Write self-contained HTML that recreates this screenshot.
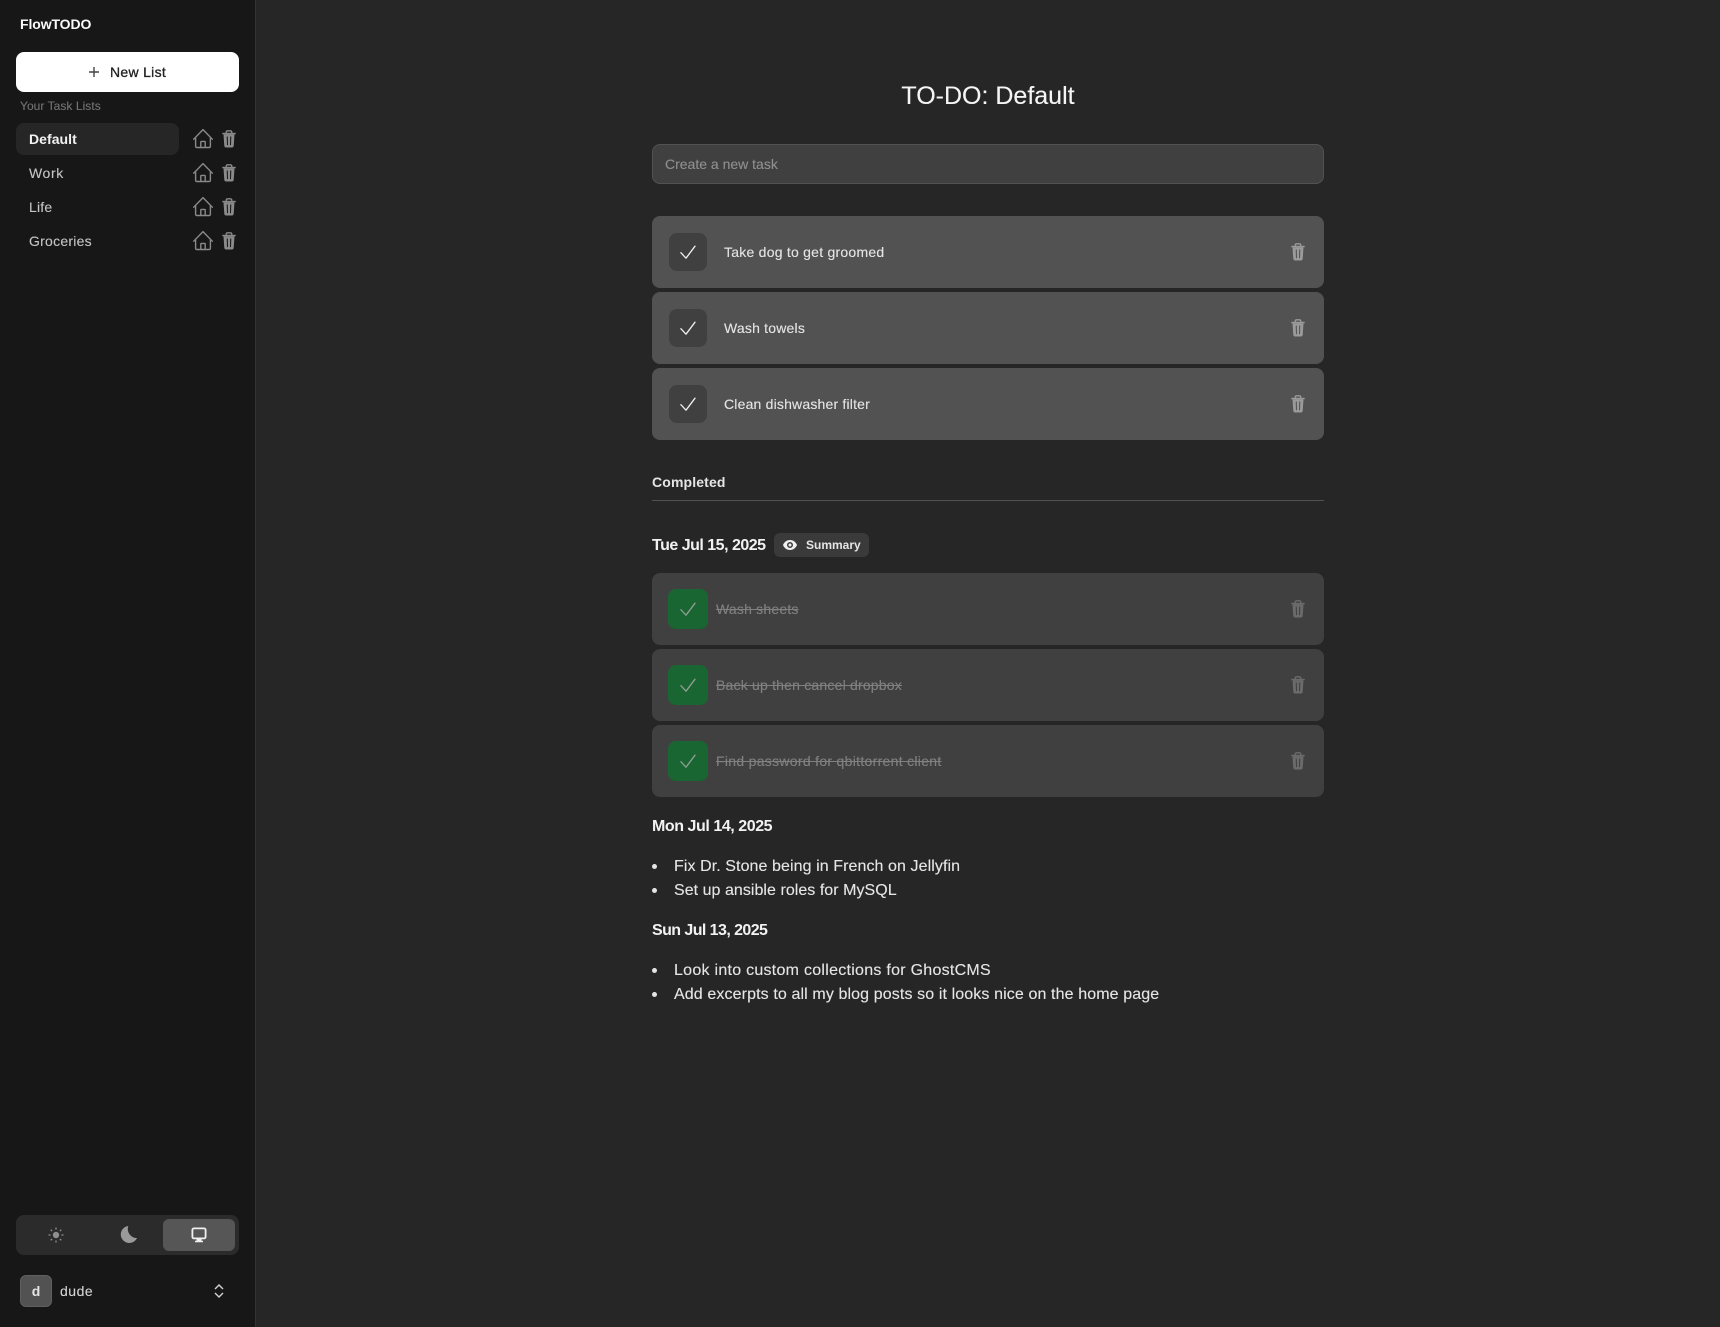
<!DOCTYPE html>
<html lang="en"><head><meta charset="utf-8"><title>FlowTODO</title>
<style>
*{box-sizing:border-box}
html,body{margin:0;padding:0;width:1720px;height:1327px;overflow:hidden;background:#262626;font-family:"Liberation Sans",sans-serif;color:#e5e5e5}
.a{position:absolute}
.t{position:absolute;white-space:nowrap;line-height:20px;height:20px;-webkit-text-stroke:.12px currentColor}
.b{font-weight:700;-webkit-text-stroke:0}
.side{left:0;top:0;width:256px;height:1327px;background:#171717;border-right:1px solid #333}
.task{left:652px;width:672px;height:72px;border-radius:8px;background:#525252}
.task.d{background:#404040}
.box{left:669px;width:38px;height:38px;border-radius:8px;background:#404040}
.gbox{left:668px;width:40px;height:40px;border-radius:8px;background:#1a6632}
svg{position:absolute;overflow:visible}
</style></head><body>
<svg width="0" height="0" style="position:absolute"><defs>
<symbol id="trash" viewBox="0 0 14 18"><path d="M4.200 3V2.200C4.200 1.200 5 .8 5.800.8h2.400c.8 0 1.600.4 1.600 1.400V3" fill="none" stroke="currentColor" stroke-width="1.300"/><path d="M.3 2.800h13.400v1.500H.3z" fill="currentColor"/><path d="M1.500 4.300h11l-.8 11.600c-.1 1-.8 1.600-1.700 1.600H4c-.9 0-1.600-.6-1.700-1.600zM4.700 6.500l.3 8.600h1l-.2-8.600zM8.200 6.500l-.2 8.600h1l.3-8.600z" fill="currentColor" fill-rule="evenodd"/></symbol>
<symbol id="home" viewBox="0 0 20 20"><path d="M.7 10.200 10 .6l9.300 9.600M2.600 8.300v9c0 .7.5 1.200 1.200 1.200h12.400c.7 0 1.200-.5 1.200-1.200v-9M7.800 18.500v-5.400c0-.4.3-.7.7-.7h3c.4 0 .7.3.7.7v5.400" fill="none" stroke="currentColor" stroke-width="1.400" stroke-linecap="round" stroke-linejoin="round"/></symbol>
<symbol id="check" viewBox="0 0 16 16"><path d="M.9 7.700 6 13.200 15 1.200" fill="none" stroke="currentColor" stroke-width="1.300" stroke-linecap="round" stroke-linejoin="round"/></symbol>
</defs></svg>

<div class="a side"></div>
<div class="t b" style="left:20px;top:14px;font-size:14px;color:#fafafa;letter-spacing:-.1px">FlowTODO</div>
<div class="a" style="left:16px;top:52px;width:223px;height:40px;background:#fff;border-radius:8px"></div>
<svg style="left:89px;top:67px;color:#444" width="10" height="10" viewBox="0 0 10 10"><path d="M5 0v10M0 5h10" stroke="currentColor" stroke-width="1.400"/></svg>
<div class="t" style="left:110px;top:62px;font-size:14px;color:#222;letter-spacing:.3px;-webkit-text-stroke:.3px #222">New List</div>
<div class="t" style="left:20px;top:96px;font-size:12px;color:#737373;letter-spacing:.05px">Your Task Lists</div>
<div class="a" style="left:16px;top:123px;width:163px;height:32px;background:#262626;border-radius:8px"></div>
<div class="t b" style="left:29px;top:129px;font-size:14px;color:#f2f2f2;letter-spacing:.05px">Default</div>
<div class="t" style="left:29px;top:163px;font-size:14px;color:#c4c4c4;letter-spacing:.6px">Work</div>
<div class="t" style="left:29px;top:197px;font-size:14px;color:#c4c4c4;letter-spacing:.2px">Life</div>
<div class="t" style="left:29px;top:231px;font-size:14px;color:#c4c4c4;letter-spacing:.25px">Groceries</div>

<svg style="left:193px;top:129px;color:#8a8a8a" width="20" height="20"><use href="#home"/></svg>
<svg style="left:222px;top:130px;color:#8a8a8a" width="14" height="18"><use href="#trash"/></svg>
<svg style="left:193px;top:163px;color:#8a8a8a" width="20" height="20"><use href="#home"/></svg>
<svg style="left:222px;top:164px;color:#8a8a8a" width="14" height="18"><use href="#trash"/></svg>
<svg style="left:193px;top:197px;color:#8a8a8a" width="20" height="20"><use href="#home"/></svg>
<svg style="left:222px;top:198px;color:#8a8a8a" width="14" height="18"><use href="#trash"/></svg>
<svg style="left:193px;top:231px;color:#8a8a8a" width="20" height="20"><use href="#home"/></svg>
<svg style="left:222px;top:232px;color:#8a8a8a" width="14" height="18"><use href="#trash"/></svg>

<div class="a" style="left:16px;top:1215px;width:223px;height:40px;background:#2b2b2b;border-radius:8px"></div>
<div class="a" style="left:163px;top:1219px;width:72px;height:32px;background:#565656;border-radius:6px"></div>
<svg style="left:48px;top:1227px;color:#8f8f8f" width="16" height="16" viewBox="0 0 16 16"><circle cx="8" cy="8" r="3.200" fill="currentColor"/><path d="M8 .5v2M8 13.500v2M.5 8h2M13.500 8h2M2.700 2.700l1.400 1.400M11.900 11.900l1.400 1.400M2.700 13.300l1.400-1.400M11.900 4.100l1.400-1.400" stroke="currentColor" stroke-width="1.300"/></svg>
<svg style="left:120px;top:1226px;color:#9a9a9a" width="17" height="17" viewBox="0 0 17 17"><path d="M8.300 0A8.500 8.500 0 1 0 17 12 A9 9 0 0 1 8.300 0z" fill="currentColor"/></svg>
<svg style="left:191px;top:1227px;color:#f0f0f0" width="16" height="16" viewBox="0 0 16 16"><rect x="1.400" y="1.400" width="13.200" height="10" rx="1.500" fill="none" stroke="currentColor" stroke-width="1.800"/><path d="M5.500 12h5v1.800h1.500v1.500H4v-1.500h1.500z" fill="currentColor"/></svg>

<div class="a" style="left:20px;top:1275px;width:32px;height:32px;background:#525252;border-radius:6px;border:1px solid #5f5f5f"></div>
<div class="t b" style="left:20px;top:1281px;width:32px;text-align:center;font-size:14px;color:#e5e5e5">d</div>
<div class="t" style="left:60px;top:1281px;font-size:14px;color:#d4d4d4;letter-spacing:.5px">dude</div>
<svg style="left:214px;top:1284px;color:#d4d4d4" width="10" height="14" viewBox="0 0 10 14"><path d="M1 5 5 1l4 4M1 9l4 4 4-4" fill="none" stroke="currentColor" stroke-width="1.400"/></svg>

<div class="t" style="left:652px;top:81px;width:672px;height:30px;line-height:30px;text-align:center;font-size:25px;color:#f5f5f5">TO-DO: Default</div>

<div class="a" style="left:652px;top:144px;width:672px;height:40px;background:#404040;border:1px solid #525252;border-radius:8px"></div>
<div class="t" style="left:665px;top:154px;font-size:14px;color:#8f8f8f">Create a new task</div>

<div class="a task" style="top:216px"></div>
<div class="a box" style="top:233px"></div>
<svg style="left:680px;top:245px;color:#f0f0f0" width="16" height="16"><use href="#check"/></svg>
<div class="t" style="left:724px;top:242px;font-size:14px;color:#e5e5e5;letter-spacing:.24px">Take dog to get groomed</div>
<svg style="left:1291px;top:243px;color:#9a9a9a" width="14" height="18"><use href="#trash"/></svg>

<div class="a task" style="top:292px"></div>
<div class="a box" style="top:309px"></div>
<svg style="left:680px;top:321px;color:#f0f0f0" width="16" height="16"><use href="#check"/></svg>
<div class="t" style="left:724px;top:318px;font-size:14px;color:#e5e5e5;letter-spacing:.2px">Wash towels</div>
<svg style="left:1291px;top:319px;color:#9a9a9a" width="14" height="18"><use href="#trash"/></svg>

<div class="a task" style="top:368px"></div>
<div class="a box" style="top:385px"></div>
<svg style="left:680px;top:397px;color:#f0f0f0" width="16" height="16"><use href="#check"/></svg>
<div class="t" style="left:724px;top:394px;font-size:14px;color:#e5e5e5;letter-spacing:.19px">Clean dishwasher filter</div>
<svg style="left:1291px;top:395px;color:#9a9a9a" width="14" height="18"><use href="#trash"/></svg>

<div class="t b" style="left:652px;top:472px;font-size:14px;color:#e5e5e5;letter-spacing:.14px">Completed</div>
<div class="a" style="left:652px;top:500px;width:672px;height:1px;background:#525252"></div>

<div class="t b" style="left:652px;top:536px;font-size:16px;color:#f2f2f2;letter-spacing:-.5px">Tue Jul 15, 2025</div>
<div class="a" style="left:774px;top:533px;width:95px;height:24px;background:#3a3a3a;border-radius:6px"></div>
<svg style="left:783px;top:540px;color:#f0f0f0" width="14" height="10" viewBox="0 0 14 10"><path d="M7 0C3.800 0 1.200 2 0 5c1.200 3 3.800 5 7 5s5.800-2 7-5c-1.200-3-3.800-5-7-5zm0 8a3 3 0 1 1 0-6 3 3 0 0 1 0 6z" fill="currentColor" fill-rule="evenodd"/><circle cx="7" cy="5" r="1.500" fill="currentColor"/></svg>
<div class="t b" style="left:806px;top:535px;font-size:12px;color:#e5e5e5">Summary</div>

<div class="a task d" style="top:573px"></div>
<div class="a gbox" style="top:589px"></div>
<svg style="left:680px;top:602px;color:#8f9f93" width="16" height="16"><use href="#check"/></svg>
<div class="t" style="left:716px;top:599px;font-size:14px;color:#808080;text-decoration:line-through;letter-spacing:.2px">Wash sheets</div>
<svg style="left:1291px;top:600px;color:#6b6b6b" width="14" height="18"><use href="#trash"/></svg>

<div class="a task d" style="top:649px"></div>
<div class="a gbox" style="top:665px"></div>
<svg style="left:680px;top:678px;color:#8f9f93" width="16" height="16"><use href="#check"/></svg>
<div class="t" style="left:716px;top:675px;font-size:14px;color:#808080;text-decoration:line-through;letter-spacing:.2px">Back up then cancel dropbox</div>
<svg style="left:1291px;top:676px;color:#6b6b6b" width="14" height="18"><use href="#trash"/></svg>

<div class="a task d" style="top:725px"></div>
<div class="a gbox" style="top:741px"></div>
<svg style="left:680px;top:754px;color:#8f9f93" width="16" height="16"><use href="#check"/></svg>
<div class="t" style="left:716px;top:751px;font-size:14px;color:#808080;text-decoration:line-through;letter-spacing:.3px">Find password for qbittorrent client</div>
<svg style="left:1291px;top:752px;color:#6b6b6b" width="14" height="18"><use href="#trash"/></svg>

<div class="t b" style="left:652px;top:817px;font-size:16px;color:#f2f2f2;letter-spacing:-.44px">Mon Jul 14, 2025</div>
<div class="a" style="left:652px;top:864px;width:5px;height:5px;border-radius:50%;background:#e5e5e5"></div>
<div class="t" style="left:674px;top:857px;font-size:16px;color:#e5e5e5;letter-spacing:.08px">Fix Dr. Stone being in French on Jellyfin</div>
<div class="a" style="left:652px;top:888px;width:5px;height:5px;border-radius:50%;background:#e5e5e5"></div>
<div class="t" style="left:674px;top:881px;font-size:16px;color:#e5e5e5;letter-spacing:.04px">Set up ansible roles for MySQL</div>

<div class="t b" style="left:652px;top:921px;font-size:16px;color:#f2f2f2;letter-spacing:-.57px">Sun Jul 13, 2025</div>
<div class="a" style="left:652px;top:968px;width:5px;height:5px;border-radius:50%;background:#e5e5e5"></div>
<div class="t" style="left:674px;top:961px;font-size:16px;color:#e5e5e5;letter-spacing:.27px">Look into custom collections for GhostCMS</div>
<div class="a" style="left:652px;top:992px;width:5px;height:5px;border-radius:50%;background:#e5e5e5"></div>
<div class="t" style="left:674px;top:985px;font-size:16px;color:#e5e5e5;letter-spacing:.115px">Add excerpts to all my blog posts so it looks nice on the home page</div>
</body></html>
